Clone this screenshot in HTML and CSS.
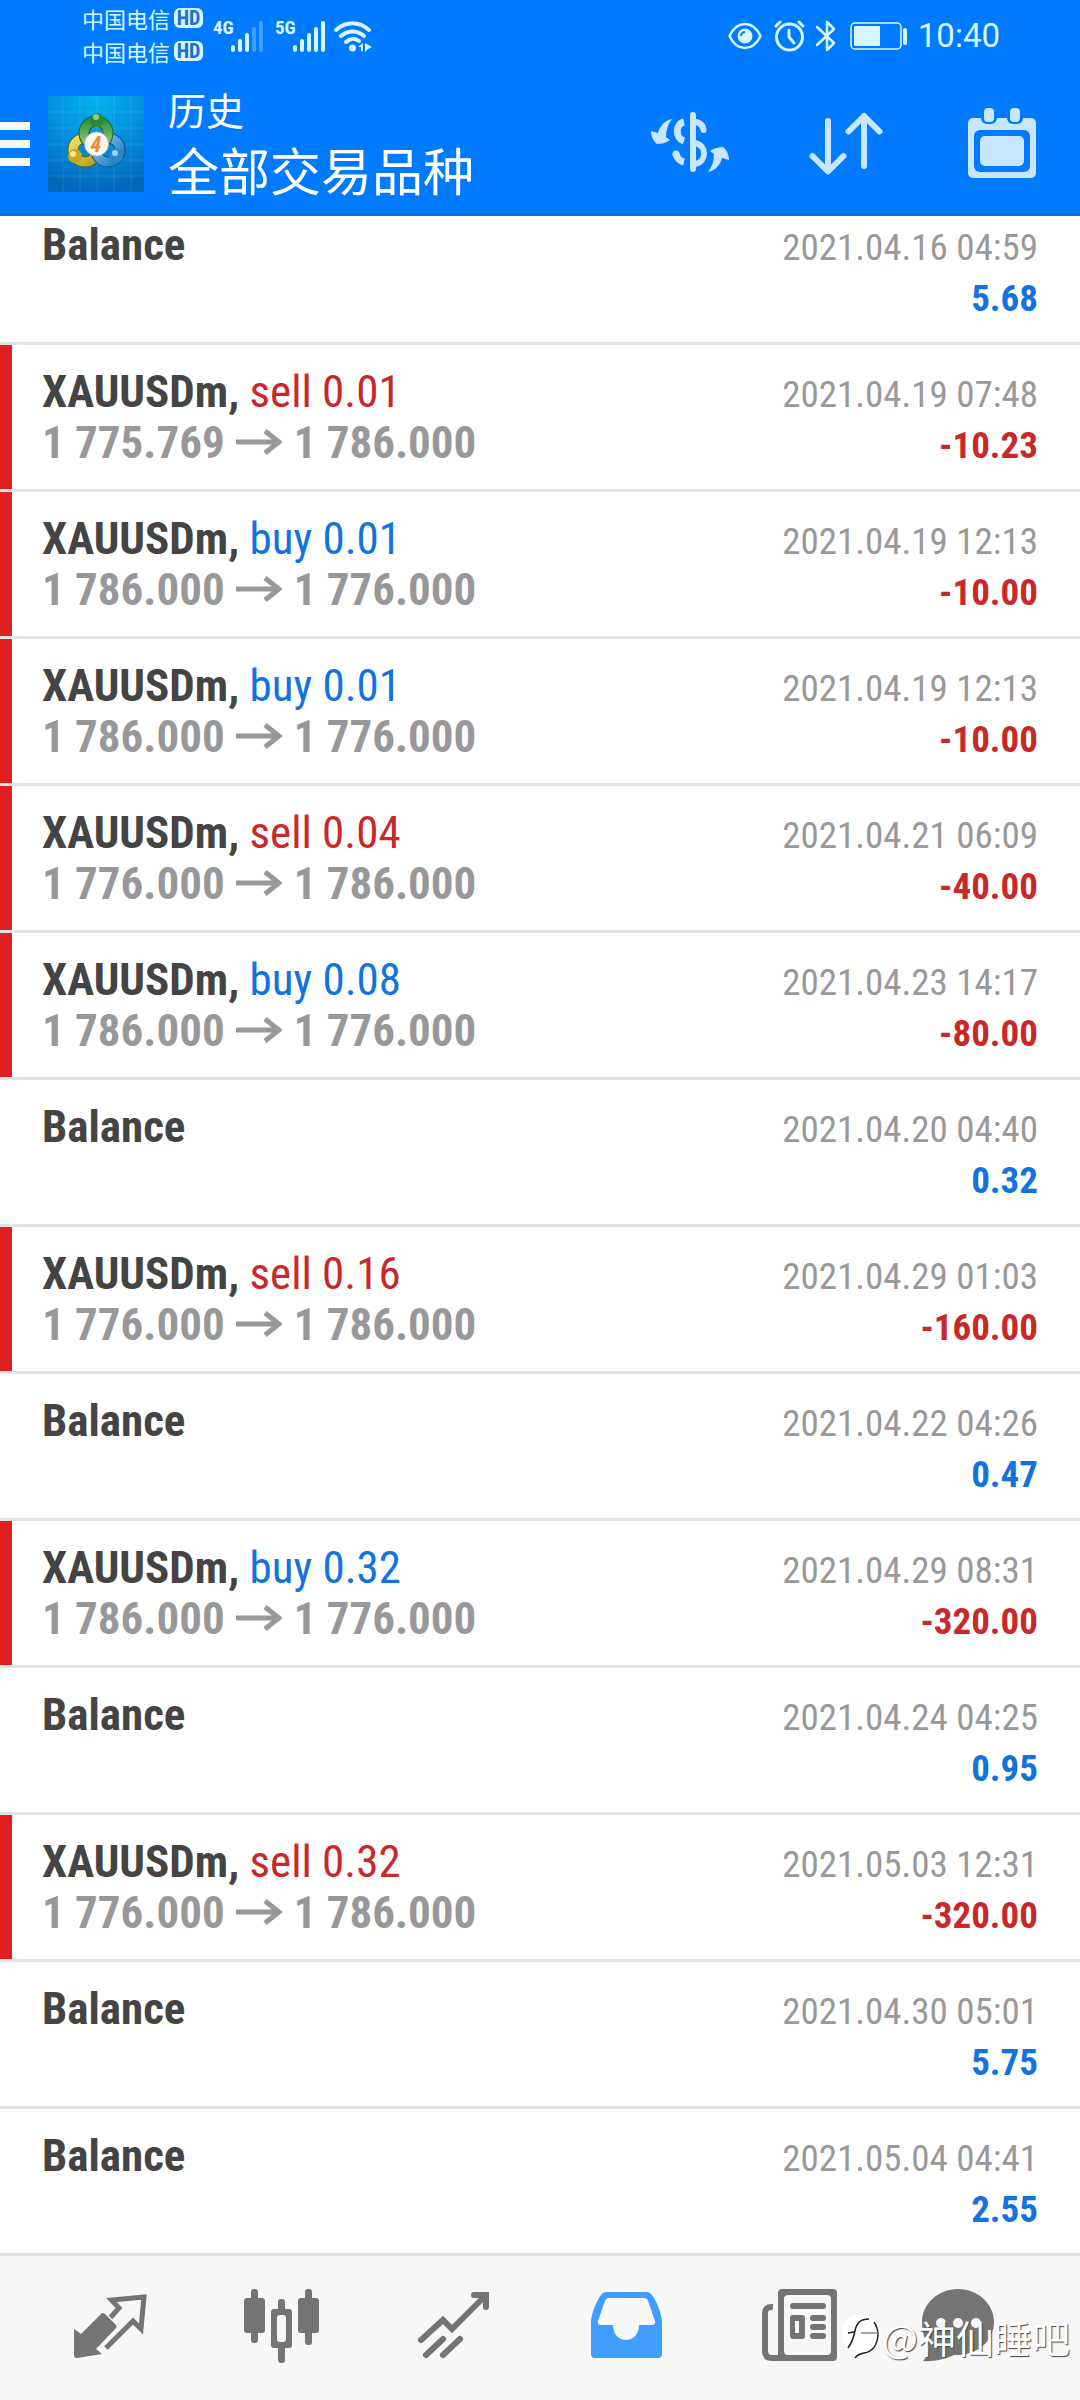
FILE: index.html
```html
<!DOCTYPE html>
<html lang="zh-CN">
<head>
<meta charset="utf-8">
<meta name="viewport" content="width=device-width, initial-scale=1">
<title>历史</title>
<link rel="stylesheet" href="styles.css">
</head>
<body>
<header class="header">
  <div class="status">
    <div class="carriers">
      <div class="carrier">中国电信<span class="hd">HD</span></div>
      <div class="carrier">中国电信<span class="hd">HD</span></div>
    </div>
    <div class="signal signal-4g">
      <span class="net">4G</span>
      <svg width="33" height="31" viewBox="0 0 33 31" fill="currentColor" aria-hidden="true"><rect y="24" width="4" height="7" rx="2"/><rect x="7" y="18" width="4" height="13" rx="2"/><rect x="14" y="12" width="4" height="19" rx="2"/><g opacity=".3"><rect x="21" y="6" width="4" height="25" rx="2"/><rect x="28" width="4" height="31" rx="2"/></g></svg>
    </div>
    <div class="signal">
      <span class="net">5G</span>
      <svg width="33" height="31" viewBox="0 0 33 31" fill="currentColor" aria-hidden="true"><rect y="24" width="4" height="7" rx="2"/><rect x="7" y="18" width="4" height="13" rx="2"/><rect x="14" y="12" width="4" height="19" rx="2"/><rect x="21" y="6" width="4" height="25" rx="2"/><rect x="28" width="4" height="31" rx="2"/></g></svg>
    </div>
    <svg class="wifi" width="38" height="31" viewBox="0 0 38 31" fill="none" stroke="currentColor" stroke-width="4" stroke-linecap="round" aria-hidden="true"><path d="M2 9C12 0 25 0 35 9"/><path d="M7 15C14 9 23 9 30 15"/><path d="M12 21C16 17 21 17 25 20"/><circle cx="18.500" cy="27" r="3.500" fill="currentColor" stroke="none"/><path d="M24 26l5-4v8h-2v-4zM31 22l7 4-4 2-3 3z" fill="currentColor" stroke="none"/></svg>
    <div class="status-right">
      <svg width="34" height="30" viewBox="0 0 34 30" fill="none" stroke="currentColor" stroke-width="2.500" aria-hidden="true"><path d="M1.500 15C9 -1 25 -1 32.500 15C25 31 9 31 1.500 15Z"/><circle cx="17" cy="15" r="7.500" fill="currentColor" stroke="none"/><path d="M13 15a4 4 0 0 1 4-4" stroke="#007aff" stroke-width="2"/></svg>
      <svg class="alarm" width="31" height="32" viewBox="0 0 31 32" fill="none" stroke="currentColor" stroke-width="3" stroke-linecap="round" aria-hidden="true"><circle cx="15.500" cy="17" r="13"/><path d="M15 10v7l5 6"/><path d="M2 6l4-4M29 6l-4-4"/></svg>
      <svg class="bluetooth" width="21" height="32" viewBox="0 0 21 32" fill="none" stroke="currentColor" stroke-width="2.500" stroke-linecap="round" stroke-linejoin="round" aria-hidden="true"><path d="M2 7L19 23L12 30V2L19 9L2 25"/></svg>
      <svg class="battery" width="58" height="28" viewBox="0 0 58 28" aria-hidden="true"><rect x="1" y="1" width="50" height="26" rx="4" fill="none" stroke="currentColor" stroke-width="1.500"/><rect x="4" y="4" width="26" height="20" rx="1" fill="currentColor"/><rect x="53" y="6" width="4" height="17" rx="2" fill="currentColor"/></svg>
      <time class="clock">10:40</time>
    </div>
  </div>
  <div class="toolbar">
    <button class="menu" aria-label="菜单"><svg width="30" height="44" viewBox="0 0 30 44" fill="#f2f9ff"><path d="M0 0h30v8H0zM0 18h30v8H0zM0 36h30v8H0z"/></svg></button>
    <svg class="logo" width="96" height="96" viewBox="0 0 96 96" aria-hidden="true">
      <defs>
        <radialGradient id="bg" cx=".5" cy="0" r="1"><stop offset="0" stop-color="#02b4f0"/><stop offset=".5" stop-color="#0290df"/><stop offset="1" stop-color="#0268bb"/></radialGradient>
        <linearGradient id="gr" x2="0" y2="1"><stop offset="0" stop-color="#2f9440"/><stop offset="1" stop-color="#8fc97e"/></linearGradient>
        <linearGradient id="ye" x2="1" y2="1"><stop offset="0" stop-color="#efe069"/><stop offset="1" stop-color="#b99e13"/></linearGradient>
        <linearGradient id="bl" x2="1" y2="1"><stop offset="0" stop-color="#8ecbf0"/><stop offset="1" stop-color="#1778c0"/></linearGradient>
      </defs>
      <rect width="96" height="96" fill="url(#bg)"/>
      <path d="M15 0v96M32 0v96M49 0v96M66 0v96M83 0v96M0 16h96M0 32h96M0 48h96M0 64h96M0 80h96" stroke="#fff" stroke-opacity=".1"/>
      <g fill="none" stroke-linecap="round">
        <circle cx="37" cy="54" r="12" stroke="#5a6416" stroke-width="11"/><circle cx="37" cy="54" r="12" stroke="url(#ye)" stroke-width="9"/>
        <circle cx="60" cy="54" r="12" stroke="#0b4f8a" stroke-width="11"/><circle cx="60" cy="54" r="12" stroke="url(#bl)" stroke-width="9"/>
        <circle cx="48" cy="37" r="12" stroke="#17601f" stroke-width="11"/><circle cx="48" cy="37" r="12" stroke="url(#gr)" stroke-width="9"/>
      </g>
      <circle cx="49" cy="24" r="7" fill="#2a8b3a"/><circle cx="48" cy="21" r="3" fill="#8bd18c"/>
      <circle cx="27" cy="60" r="7" fill="#c4aa1c"/><circle cx="25" cy="58" r="3" fill="#f3ea8a"/>
      <circle cx="68" cy="60" r="7" fill="#2b86cc"/><circle cx="67" cy="57" r="3" fill="#9bd5f7"/>
      <circle cx="48.500" cy="48" r="12" fill="#fbf8f4" stroke="#bbb"/>
      <text class="logo-digit" x="48" y="56" text-anchor="middle">4</text>
    </svg>
    <div class="titles">
      <h1 class="title">历史</h1>
      <p class="subtitle">全部交易品种</p>
    </div>
    <div class="actions">
      <button class="action" aria-label="品种"><svg width="84" height="72" viewBox="0 0 84 72" fill="none" stroke="#c8e6ff" stroke-width="6"><path d="M45 7V61" stroke-linecap="round"/><path d="M36 14C27 16 27 30 36 33M28 46C29 50 32 53 36 54" stroke-width="7"/><path d="M48 14C53 15 55 18 55.500 22" stroke-linecap="round"/><path d="M47 35C59 37 59 54 47 56" stroke-width="6"/><circle cx="28" cy="46" r="3.500" fill="#c8e6ff" stroke="none"/><g fill="#c8e6ff" stroke="none"><path id="swoop" d="M24 11C16 12 11 20 10 25L3 23C3 29 6 34 9 36C13 36 18 35 22 32L18 29C18 22 20 16 24 11Z"/><use href="#swoop" transform="rotate(180 42 37.500)"/></g></svg></button>
      <button class="action" aria-label="排序"><svg width="80" height="72" viewBox="0 0 80 72" fill="none" stroke="#c8e6ff" stroke-width="6" stroke-linecap="round" stroke-linejoin="round"><path d="M22 13V63M6.500 48L22 63.500L37.500 48M58 58V8M42.500 23.500L58 8L73.500 23.500"/></svg></button>
      <button class="action" aria-label="日期"><svg width="72" height="72" viewBox="0 0 72 72" fill="#c8e6ff"><rect x="2" y="10" width="68" height="60" rx="5"/><g fill="#007aff"><rect x="8" y="22" width="56" height="42" rx="6"/><rect x="15" y="-2" width="16" height="18" rx="6"/><rect x="41" y="-2" width="16" height="18" rx="6"/></g><rect x="14" y="28" width="44" height="30" rx="5"/><rect x="18" width="10" height="14" rx="4"/><rect x="44" width="10" height="14" rx="4"/></svg></button>
    </div>
  </div>
</header>

<main>
  <svg class="defs" aria-hidden="true"><symbol id="to" viewBox="0 0 46 26"><path d="M0 13H43M29 2L43 13L29 24" fill="none" stroke="currentColor" stroke-width="5"/></symbol></svg>
  <ul class="deals">
    <li class="deal"><div class="line"><b>Balance</b><time>2021.04.16 04:59</time></div><div class="line"><b class="amount up">5.68</b></div></li>
    <li class="deal loss"><div class="line"><b>XAUUSDm, <span class="down">sell 0.01</span></b><time>2021.04.19 07:48</time></div><div class="line"><span class="price">1 775.769<svg class="to" role="img" aria-label="→"><use href="#to"/></svg>1 786.000</span><b class="amount down">-10.23</b></div></li>
    <li class="deal loss"><div class="line"><b>XAUUSDm, <span class="up">buy 0.01</span></b><time>2021.04.19 12:13</time></div><div class="line"><span class="price">1 786.000<svg class="to" role="img" aria-label="→"><use href="#to"/></svg>1 776.000</span><b class="amount down">-10.00</b></div></li>
    <li class="deal loss"><div class="line"><b>XAUUSDm, <span class="up">buy 0.01</span></b><time>2021.04.19 12:13</time></div><div class="line"><span class="price">1 786.000<svg class="to" role="img" aria-label="→"><use href="#to"/></svg>1 776.000</span><b class="amount down">-10.00</b></div></li>
    <li class="deal loss"><div class="line"><b>XAUUSDm, <span class="down">sell 0.04</span></b><time>2021.04.21 06:09</time></div><div class="line"><span class="price">1 776.000<svg class="to" role="img" aria-label="→"><use href="#to"/></svg>1 786.000</span><b class="amount down">-40.00</b></div></li>
    <li class="deal loss"><div class="line"><b>XAUUSDm, <span class="up">buy 0.08</span></b><time>2021.04.23 14:17</time></div><div class="line"><span class="price">1 786.000<svg class="to" role="img" aria-label="→"><use href="#to"/></svg>1 776.000</span><b class="amount down">-80.00</b></div></li>
    <li class="deal"><div class="line"><b>Balance</b><time>2021.04.20 04:40</time></div><div class="line"><b class="amount up">0.32</b></div></li>
    <li class="deal loss"><div class="line"><b>XAUUSDm, <span class="down">sell 0.16</span></b><time>2021.04.29 01:03</time></div><div class="line"><span class="price">1 776.000<svg class="to" role="img" aria-label="→"><use href="#to"/></svg>1 786.000</span><b class="amount down">-160.00</b></div></li>
    <li class="deal"><div class="line"><b>Balance</b><time>2021.04.22 04:26</time></div><div class="line"><b class="amount up">0.47</b></div></li>
    <li class="deal loss"><div class="line"><b>XAUUSDm, <span class="up">buy 0.32</span></b><time>2021.04.29 08:31</time></div><div class="line"><span class="price">1 786.000<svg class="to" role="img" aria-label="→"><use href="#to"/></svg>1 776.000</span><b class="amount down">-320.00</b></div></li>
    <li class="deal"><div class="line"><b>Balance</b><time>2021.04.24 04:25</time></div><div class="line"><b class="amount up">0.95</b></div></li>
    <li class="deal loss"><div class="line"><b>XAUUSDm, <span class="down">sell 0.32</span></b><time>2021.05.03 12:31</time></div><div class="line"><span class="price">1 776.000<svg class="to" role="img" aria-label="→"><use href="#to"/></svg>1 786.000</span><b class="amount down">-320.00</b></div></li>
    <li class="deal"><div class="line"><b>Balance</b><time>2021.04.30 05:01</time></div><div class="line"><b class="amount up">5.75</b></div></li>
    <li class="deal"><div class="line"><b>Balance</b><time>2021.05.04 04:41</time></div><div class="line"><b class="amount up">2.55</b></div></li>
  </ul>
</main>

<nav class="tabs">
  <button class="tab" aria-label="行情"><svg width="84" height="84" viewBox="0 0 84 84" fill="currentColor"><path d="M6 43L13 48L33 28Q35 26 37 28L48 39Q49 41 48 42L28 63L34 68L9 72Q6 72 6 69Z"/><path d="M42.500 31.500L51 22L43.500 14L76 11L73 43L65 35L38 62" fill="none" stroke="currentColor" stroke-width="5"/></svg></button>
  <button class="tab" aria-label="图表"><svg width="84" height="84" viewBox="0 0 84 84" fill="currentColor"><rect x="4" y="12" width="21" height="35" rx="3"/><rect x="11" y="3" width="7" height="54" rx="3"/><rect x="58" y="12" width="21" height="35" rx="3"/><rect x="65" y="3" width="7" height="56" rx="3"/><rect x="38" y="13" width="7" height="64" rx="3"/><rect x="31" y="23" width="21" height="39" rx="3"/><rect x="37" y="29" width="9" height="27" rx="3" fill="#f7f7f7"/></svg></button>
  <button class="tab" aria-label="交易"><svg width="84" height="84" viewBox="0 0 84 84" fill="none" stroke="currentColor" stroke-width="6" stroke-linecap="round"><path d="M9 54L31 34L40 43L74 9M62 9H74V21M31 53L14 69M48 53L31 69"/></svg></button>
  <button class="tab active" aria-label="历史" aria-current="page"><svg width="84" height="84" viewBox="0 0 84 84" fill="currentColor" fill-rule="evenodd"><path d="M22 6H63Q66 6 68 9C73 16 78 28 78 37V68Q78 72 74 72H11Q7 72 7 68V37C7 28 12 16 17 9Q19 6 22 6ZM25 12Q22 12 21 15L14 35Q13 39 17 39H29C29 59 55 59 55 39H68Q72 39 71 35L64 15Q63 12 60 12Z"/></svg></button>
  <button class="tab" aria-label="新闻"><svg width="84" height="84" viewBox="0 0 84 84" fill="currentColor"><path fill-rule="evenodd" d="M26 3H77Q81 3 81 7V71Q81 75 77 75H22V7Q22 3 26 3ZM32 9Q28 9 28 13V65Q28 69 32 69H71Q75 69 75 65V13Q75 9 71 9ZM37 29H46Q49 29 49 32V50Q49 53 46 53H37Q34 53 34 50V32Q34 29 37 29ZM39 35V47H43V35Z"/><path d="M17 21Q9 20 9 28V65Q9 72 16 72H24" fill="none" stroke="currentColor" stroke-width="6"/><rect x="34" y="17" width="36" height="6" rx="3"/><rect x="54" y="29" width="16" height="6" rx="3"/><rect x="54" y="38" width="16" height="6" rx="3"/><rect x="54" y="47" width="16" height="6" rx="3"/></svg></button>
  <button class="tab" aria-label="消息"><svg width="84" height="84" viewBox="0 0 84 84" fill="currentColor"><path d="M44 3C64 3 80 18 80 36C80 56 62 70 40 69C32 73 18 76 9 75C13 71 15 66 15 60C10 54 8 44 8 36C8 18 24 3 44 3Z"/><g fill="#f7f7f7"><circle cx="27" cy="37" r="5"/><circle cx="44" cy="37" r="5"/><circle cx="62" cy="37" r="5"/></g></svg></button>
  <div class="watermark">
    <svg width="40" height="48" viewBox="0 0 40 48" fill="none" aria-hidden="true"><path d="M20 2A18 18 0 0 1 33 33C27 41 19 42 12 45L14 38A18 18 0 0 1 20 2Z" fill="#fff"/><path d="M27 6C18 6 14 11 13 18C11 27 9 31 6 35M6 20L12 19M32 9Q36 15 36 22C35 34 29 39 22 40Q16 41 13 45" stroke="#222" stroke-width="1.500"/><path d="M19 20H36" stroke="#888" stroke-width="1.500"/></svg>
    <span>@神仙睡吧</span>
  </div>
</nav>
</body>
</html>
```
FILE: styles.css
```css
* { box-sizing: border-box; }

body {
  margin: 0;
  background: #fff;
  color: #444;
  font-family: "Roboto Condensed", Roboto, "Noto Sans CJK SC", sans-serif;
}

button {
  display: flex;
  align-items: center;
  justify-content: center;
  margin: 0;
  padding: 0;
  border: 0;
  background: none;
  color: inherit;
}

svg { display: block; flex: none; }
.defs { display: none; }

/* Header */
.header {
  position: relative;
  z-index: 1;
  background: #007aff;
  color: #fff;
  box-shadow: inset 0 -3px #0f6bd8;
}

.status {
  display: flex;
  align-items: center;
  height: 72px;
  padding: 0 80px 0 82px;
  color: #d8f6ff;
}

.carriers { padding-bottom: 3px; }

.carrier {
  display: flex;
  align-items: center;
  gap: 4px;
  height: 33px;
  font: 22px/33px "Noto Sans CJK SC", sans-serif;
}

.hd {
  width: 29px;
  height: 20px;
  border-radius: 6px;
  background: #d8f6ff;
  color: #1672d8;
  font: 700 20px/20px "Roboto Condensed", sans-serif;
  text-align: center;
}

.signal { display: flex; }
.signal-4g { margin: 0 11px 0 10px; }
.net { width: 18px; font-size: 19px; font-weight: 700; line-height: 14px; }
.wifi { margin-left: 8px; }

.status-right {
  display: flex;
  align-items: center;
  margin-left: auto;
}
.alarm { margin-left: 12px; }
.bluetooth { margin-left: 10px; }
.battery { margin: 0 10px 0 14px; }
.clock { font: 33px/40px Roboto, sans-serif; }

.toolbar {
  display: flex;
  align-items: center;
  height: 144px;
}

.menu { width: 30px; height: 96px; }
.logo { margin: 0 24px 0 18px; }
.logo-digit { fill: #ee8a2c; font: italic 700 22px "Roboto Condensed", sans-serif; }

.titles { padding-bottom: 4px; font-family: "Noto Sans CJK SC", sans-serif; }
.title, .subtitle { margin: 0; font-weight: 400; white-space: nowrap; }
.title { font-size: 38px; line-height: 54px; }
.subtitle { font-size: 51px; line-height: 66px; }

.actions { display: flex; margin-left: auto; }
.action { width: 156px; height: 144px; }

/* History list, scrolled slightly under the header */
.deals {
  margin: -18px 0 0;
  padding: 0;
  list-style: none;
}

.deal {
  height: 147px;
  padding: 21px 42px 0;
  border-bottom: 3px solid #e4e4e4;
}

.loss { box-shadow: inset 12px 0 #e02020; }

.line {
  display: flex;
  align-items: baseline;
  height: 51px;
  font-size: 45px;
  line-height: 51px;
  white-space: nowrap;
}
.line::before { content: "\200b"; }

.line span { font-weight: 400; }
.line time, .amount { margin-left: auto; font-size: 37px; }
.line time { color: #999; }
.line .price { color: #98989a; font-weight: 700; }

.to {
  display: inline-block;
  width: 46px;
  height: 26px;
  margin: 0 12px 0 11px;
  vertical-align: 3px;
}

.up { color: #1273e0; }
.down { color: #c82828; }

/* Bottom tabs */
.tabs {
  position: relative;
  display: grid;
  grid-template-columns: repeat(5, 172fr) 144fr;
  height: 144px;
  padding: 0 52px 0 24px;
  background: #f7f7f7;
  color: #747474;
}

.active { color: #419dff; }

.watermark {
  position: absolute;
  right: 10px;
  bottom: 39px;
  display: flex;
  align-items: center;
  color: #fff;
  font: 38px/48px "Noto Sans CJK SC", sans-serif;
  text-shadow: 1px 1px 1px #444;
}
```
